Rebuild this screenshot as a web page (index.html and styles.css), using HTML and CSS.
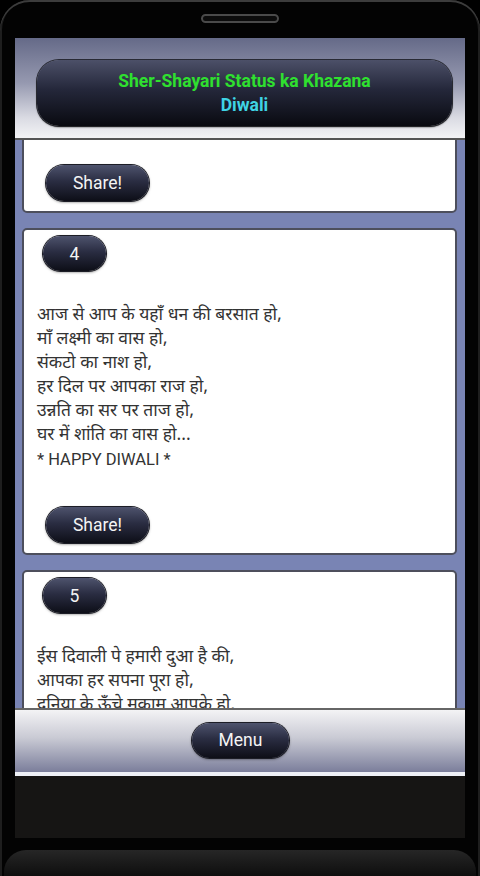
FILE: index.html
```html
<!DOCTYPE html>
<html lang="hi">
<head>
<meta charset="utf-8">
<title>Sher-Shayari Status ka Khazana - Diwali</title>
<link rel="stylesheet" href="styles.css">
</head>
<body>
<div class="phone">
  <div class="bezel-top"><div class="speaker"></div></div>
  <div class="screen">
    <header class="app-header">
      <div class="title-pill">
        <div class="title-main">Sher-Shayari Status ka Khazana</div>
        <div class="title-sub">Diwali</div>
      </div>
    </header>
    <main class="content">
      <section class="card card-first">
        <div class="spacer"></div>
        <button class="pill share">Share!</button>
      </section>
      <section class="card">
        <div class="pill num">4</div>
        <p class="poem">आज से आप के यहाँ धन की बरसात हो,<br>माँ लक्ष्मी का वास हो,<br>संकटो का नाश हो,<br>हर दिल पर आपका राज हो,<br>उन्नति का सर पर ताज हो,<br>घर में शांति का वास हो...<br><span class="latin">* HAPPY DIWALI *</span></p>
        <button class="pill share">Share!</button>
      </section>
      <section class="card">
        <div class="pill num">5</div>
        <p class="poem">ईस दिवाली पे हमारी दुआ है की,<br>आपका हर सपना पूरा हो,<br>दुनिया के ऊँचे मकाम आपके हो,<br>शोहरत की बुलंदी पर नाम आपका हो...</p>
      </section>
    </main>
    <footer class="app-footer">
      <button class="pill menu">Menu</button>
    </footer>
    <div class="footer-line"></div>
    <div class="navbar"></div>
  </div>
  <div class="bezel-bottom"><div class="chin"></div></div>
</div>
</body>
</html>
```
FILE: styles.css
```css
* { box-sizing: border-box; }
html, body { margin: 0; padding: 0; background: #000; }
body { width: 480px; height: 876px; overflow: hidden; font-family: Roboto, "Noto Sans", "Noto Sans Devanagari", sans-serif; }

.phone {
  width: 480px;
  height: 876px;
  display: flex;
  flex-direction: column;
  background: #030303;
  border-radius: 30px 30px 0 0;
  box-shadow: inset 0 2px 0 #3c3c3c, inset 2px 0 0 #1e1e1e, inset -2px 0 0 #1e1e1e;
}

.bezel-top {
  height: 38px;
  flex: none;
  display: flex;
  justify-content: center;
  padding-top: 14px;
}
.speaker {
  width: 78px;
  height: 9px;
  border-radius: 5px;
  border: 2px solid #4a4a4a;
  background: #0c0c0c;
}

.screen {
  margin: 0 15px;
  height: 800px;
  flex: none;
  display: flex;
  flex-direction: column;
}

.app-header {
  height: 102px;
  flex: none;
  padding: 22px 13px 0 22px;
  background: linear-gradient(#656a88 0%, #9699b0 45%, #dadbe3 80%, #f4f4f6 100%);
  border-bottom: 2px solid #555;
}
.title-pill {
  height: 66px;
  border-radius: 22px;
  background: linear-gradient(#4c5068 0%, #24273a 45%, #090a10 100%);
  box-shadow: 0 1px 2px #222, 0 0 0 1px #2a2c36;
  display: flex;
  flex-direction: column;
  align-items: center;
  justify-content: center;
  gap: 3px;
  font-weight: bold;
  font-size: 17.5px;
  line-height: 21px;
}
.title-main { color: #2fe02f; }
.title-sub { color: #3fd3e4; }

.content {
  height: 568px;
  flex: none;
  overflow: hidden;
  background: #7984b4;
  padding: 0 8px 0 7px;
}

.card {
  background: #fff;
  border: 2px solid #4d4f5c;
  border-radius: 5px;
  margin-bottom: 15px;
  padding: 6px 0 10px 0;
}
.card-first {
  margin-top: -39px;
  padding-top: 0;
}
.spacer { height: 62px; }

.pill {
  display: flex;
  align-items: center;
  justify-content: center;
  border: none;
  color: #f4f4f4;
  font-family: Roboto, "Noto Sans", sans-serif;
  font-size: 17.5px;
  background: linear-gradient(#4e536d 0%, #2a2d42 45%, #0d0e17 100%);
  box-shadow: 0 0 0 1px #1c1d26, 0 1px 3px rgba(0,0,0,0.6);
  border-radius: 18px;
  padding: 0;
}
.share {
  width: 103px;
  height: 36px;
  margin-left: 22px;
}
.num {
  width: 63px;
  height: 35px;
  margin-left: 19px;
}

.poem {
  margin: 33px 0 34px 13px;
  font-family: "Noto Sans Devanagari", "Noto Sans", Roboto, sans-serif;
  font-size: 17.5px;
  line-height: 24px;
  color: #333;
}
.latin {
  font-family: Roboto, "Noto Sans", sans-serif;
  font-size: 16.5px;
}

.app-footer {
  height: 64px;
  flex: none;
  border-top: 2px solid #666;
  background: linear-gradient(#f3f3f5 0%, #c9cad4 45%, #7b7e9b 100%);
  display: flex;
  justify-content: center;
  align-items: center;
  padding-bottom: 2px;
}
.menu {
  width: 97px;
  height: 35px;
  margin-left: 1px;
}
.footer-line {
  height: 4px;
  flex: none;
  background: #eef0f6;
}
.navbar {
  height: 62px;
  flex: none;
  background: #161514;
}

.bezel-bottom {
  flex: 1;
  padding-top: 12px;
}
.chin {
  height: 26px;
  margin: 0 4px;
  border-radius: 22px 22px 0 0;
  background: linear-gradient(#262626 0%, #1a1a1a 50%, #0e0e0e 100%);
}
```
